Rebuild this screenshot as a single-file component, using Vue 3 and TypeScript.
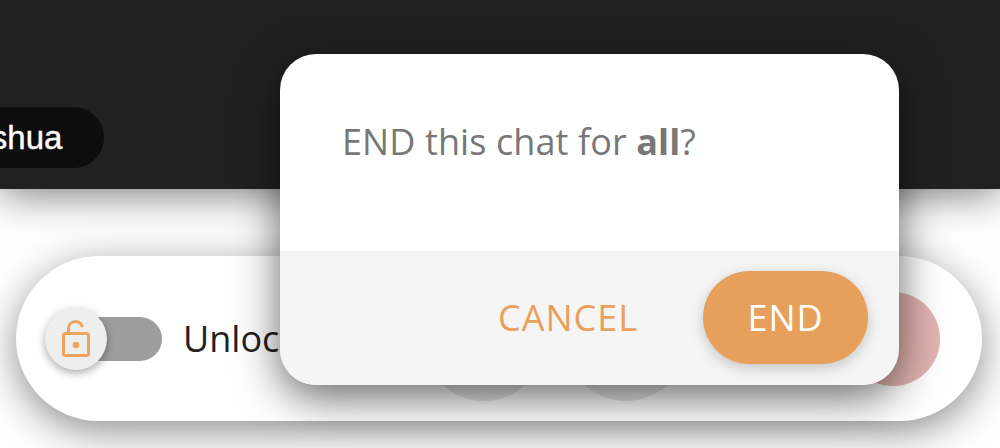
<script setup lang="ts">
const title: string = 'END this chat for'
</script>

<template>
  <div class="page">
    <header class="header">
      <div class="name-pill">Joshua</div>
    </header>
    <main class="body">
      <section class="panel">
        <div class="toggle">
          <div class="track"></div>
          <div class="knob">
            <svg width="32" height="41" viewBox="0 0 32 41" fill="none" stroke="#eca45f" stroke-width="3" stroke-linecap="round" stroke-linejoin="round">
              <rect x="3.5" y="15.5" width="25" height="22" rx="2" />
              <path d="M8.5 15.5V10.5a7 7 0 0 1 13.5-2.6" />
              <circle cx="16" cy="27" r="3.3" fill="#eca45f" stroke="none" />
            </svg>
          </div>
        </div>
        <span class="label">Unlock</span>
        <div class="actions">
          <div class="circle gray"></div>
          <div class="circle gray"></div>
          <div class="circle pink"></div>
        </div>
      </section>
    </main>
    <div class="modal">
      <div class="modal-top">
        <p class="question">{{ title }} <b>all</b>?</p>
      </div>
      <div class="modal-foot">
        <button class="btn-text">CANCEL</button>
        <button class="btn-solid">END</button>
      </div>
    </div>
  </div>
</template>

<style>
html, body { margin: 0; padding: 0; background: #fff; }
</style>

<style scoped>
.page {
  position: relative;
  width: 1000px;
  height: 448px;
  overflow: hidden;
  display: flex;
  flex-direction: column;
  font-family: "Open Sans", sans-serif;
  background: #fff;
}
.header {
  position: relative;
  z-index: 2;
  height: 189px;
  flex: none;
  box-sizing: border-box;
  padding-top: 107px;
  background: #212121;
  box-shadow: 0 4px 40px rgba(0, 0, 0, 0.55);
}
.name-pill {
  width: 184px;
  height: 61px;
  margin-left: -80px;
  box-sizing: border-box;
  padding-left: 36px;
  border-radius: 31px;
  background: #0d0d0d;
  color: #fff;
  font-family: "Liberation Sans", Arial, sans-serif;
  font-size: 33px;
  line-height: 61px;
  -webkit-text-stroke: 0.4px #fff;
}
.body {
  flex: 1;
  padding: 67px 18px 0 16px;
}
.panel {
  height: 165px;
  border-radius: 83px;
  background: #fff;
  box-shadow: 0 10px 40px rgba(0, 0, 0, 0.45);
  display: flex;
  align-items: center;
  padding: 0 42px 0 29px;
}
.toggle {
  position: relative;
  width: 117px;
  height: 62px;
  flex: none;
  display: flex;
  align-items: center;
  justify-content: flex-end;
}
.track {
  width: 90px;
  height: 44px;
  border-radius: 22px;
  background: #9e9e9e;
}
.knob {
  position: absolute;
  left: 0;
  top: 0;
  width: 62px;
  height: 62px;
  border-radius: 50%;
  background: #eeeeee;
  box-shadow: 0 3px 8px rgba(0, 0, 0, 0.35);
  display: flex;
  align-items: center;
  justify-content: center;
}
.label {
  margin-left: 21px;
  width: 130px;
  flex: none;
  font-size: 36px;
  color: #222;
}
.actions {
  margin-left: auto;
  display: flex;
  align-items: center;
  gap: 18px;
}
.circle {
  flex: none;
  border-radius: 50%;
}
.gray {
  width: 124px;
  height: 124px;
  background: #e8e8e8;
}
.pink {
  width: 94px;
  height: 94px;
  margin-left: 140px;
  background: #e3b4b0;
}
.modal {
  position: absolute;
  z-index: 3;
  left: 280px;
  top: 54px;
  width: 619px;
  height: 331px;
  border-radius: 36px;
  overflow: hidden;
  display: flex;
  flex-direction: column;
  box-shadow: 0 12px 44px rgba(0, 0, 0, 0.6);
}
.modal-top {
  height: 197px;
  flex: none;
  box-sizing: border-box;
  padding: 64px 62px 0;
  background: #fff;
}
.question {
  margin: 0;
  font-size: 36px;
  line-height: 48px;
  letter-spacing: 0.1px;
  color: #777;
}
.question b { font-weight: 700; }
.modal-foot {
  flex: 1;
  display: flex;
  align-items: center;
  justify-content: flex-end;
  gap: 65px;
  padding: 0 31px 2px 0;
  background: #f5f5f5;
}
.btn-text, .btn-solid {
  border: 0;
  padding: 0;
  font-family: inherit;
  font-size: 36px;
  letter-spacing: 1px;
}
.btn-text {
  background: none;
  color: #e8a05c;
  font-weight: 500;
}
.btn-solid {
  width: 165px;
  height: 93px;
  border-radius: 47px;
  background: #e7a05c;
  color: #fff;
  font-weight: 500;
  box-shadow: 0 4px 14px rgba(0, 0, 0, 0.2);
}
</style>
